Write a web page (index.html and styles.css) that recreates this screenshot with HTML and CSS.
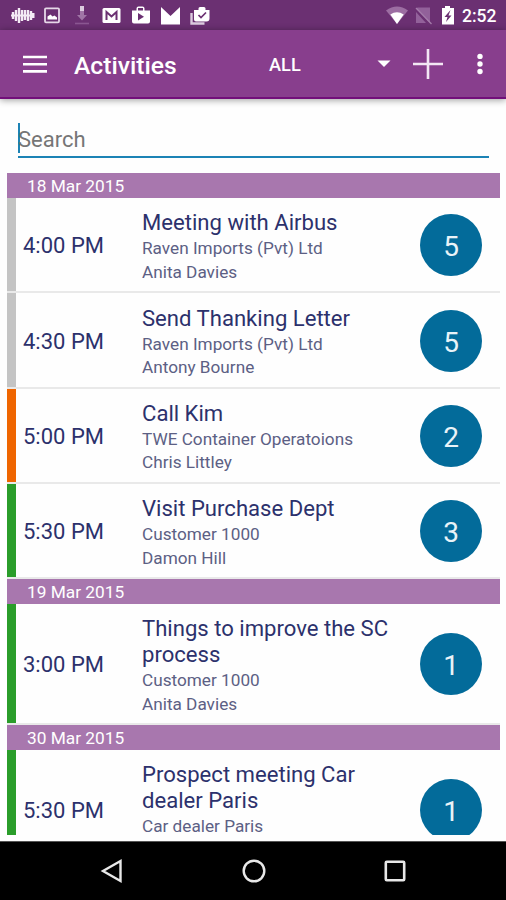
FILE: index.html
```
<!DOCTYPE html>
<html lang="en">
<head>
  <meta charset="UTF-8">
  <title>Activities</title>
  <link rel="stylesheet" href="styles.css">
</head>
<body>
<div class="screen">
  <div class="statusbar">
    <svg class="notifications" width="220" height="30" viewBox="0 0 220 30">
      <g stroke="#f4ebf5" stroke-width="2.4">
        <path d="M13 12v7M16 10v11M19 8v15M22 10v11M25 10v10M28 10v11M31 11v9M33.300 13v5"/>
        <path d="M11 15.500h23" stroke-width="2"/>
      </g>
      <rect x="45" y="8.300" width="14" height="14" rx="1" fill="none" stroke="#e6d8e8" stroke-width="1.800"/>
      <path d="M47.500 19.500v-3l3-2 2 2 2-1 2.500 2v2z" fill="#fff"/>
      <path d="M80 6h4v5h-4z" fill="#dccbdf"/>
      <path d="M80 11h4v4h3l-5 5.500-5-5.500h3z" fill="#a076a6"/>
      <path d="M75 23.500h14" stroke="#8b5792" stroke-width="1.600"/>
      <rect x="102.500" y="8" width="18" height="15" rx="1.500" fill="#fff"/>
      <path d="M106.500 20v-8l5 4.500 5-4.500v8" fill="none" stroke="#6b3072" stroke-width="2"/>
      <path d="M132 10.500h4.500v-2q0-2 2-2h4q2 0 2 2v2h5.500v11q0 2-2 2h-14q-2 0-2-2zM138 8v2.500h5V8z" fill="#fff" fill-rule="evenodd"/>
      <path d="M138 13v7.500l6-3.700z" fill="#6b3072"/>
      <path d="M161 7l9.500 9L180 7v17.500h-19z" fill="#fff"/>
      <path d="M191.500 13v10.500h13" fill="none" stroke="#dccbdf" stroke-width="2.400"/>
      <path d="M194 10h4.500V8.500q0-1.500 1.500-1.500h4q1.500 0 1.500 1.500V10h4v8.500q0 3-3 3h-10.500q-2 0-2-2z" fill="#fff"/>
      <path d="M198.500 15l2.500 2.500 5-5" fill="none" stroke="#6b3072" stroke-width="1.700"/>
    </svg>
    <svg class="signals" width="74" height="30" viewBox="384 0 74 30">
      <path d="M386 10.500q11-8 22 0l-11 13.500z" fill="#9c6da2"/>
      <path d="M390.300 14.500q6.700-4.500 13.400 0l-6.700 9.500z" fill="#fff"/>
      <path d="M430 7.500v15.500l-13.500-14.500 1-1zM416 12v11h10z" fill="#92619a"/>
      <path d="M416 8l15.500 16" stroke="#a57cab" stroke-width="1.300"/>
      <path d="M442 8h3V6h5v2h4v16.500h-12z" fill="#fff"/>
      <path d="M450.500 10l-6 7h3l-1.500 5 5.500-6.500h-3z" fill="#6b3072"/>
    </svg>
    <span class="clock">2:52</span>
  </div>

  <div class="toolbar">
    <svg class="menu" width="24" height="18" viewBox="0 0 24 18">
      <path d="M0 2h24M0 9.200h24M0 16.400h24" stroke="#fff" stroke-width="2.600"/>
    </svg>
    <h1>Activities</h1>
    <span class="filter">ALL</span>
    <svg class="arrow" width="14" height="8" viewBox="0 0 14 8"><path d="M.5.500h13L7 7z" fill="#fff"/></svg>
    <svg class="add" width="30" height="30" viewBox="0 0 30 30"><path d="M15 0v30M0 15h30" stroke="#f3e6f4" stroke-width="2.600"/></svg>
    <svg class="more" width="6" height="22" viewBox="0 0 6 22">
      <g fill="#fff"><circle cx="3" cy="3.400" r="2.700"/><circle cx="3" cy="11" r="2.700"/><circle cx="3" cy="18.500" r="2.700"/></g>
    </svg>
  </div>

  <div class="content">
    <div class="search"><span>Search</span></div>

    <div class="list">
      <div class="date">18 Mar 2015</div>
      <div class="row gray">
        <div class="time">4:00 PM</div>
        <div class="info"><h2>Meeting with Airbus</h2><p>Raven Imports (Pvt) Ltd</p><p>Anita Davies</p></div>
        <div class="count">5</div>
      </div>
      <div class="row gray">
        <div class="time">4:30 PM</div>
        <div class="info"><h2>Send Thanking Letter</h2><p>Raven Imports (Pvt) Ltd</p><p>Antony Bourne</p></div>
        <div class="count">5</div>
      </div>
      <div class="row orange">
        <div class="time">5:00 PM</div>
        <div class="info"><h2>Call Kim</h2><p>TWE Container Operatoions</p><p>Chris Littley</p></div>
        <div class="count">2</div>
      </div>
      <div class="row green">
        <div class="time">5:30 PM</div>
        <div class="info"><h2>Visit Purchase Dept</h2><p>Customer 1000</p><p>Damon Hill</p></div>
        <div class="count">3</div>
      </div>

      <div class="date">19 Mar 2015</div>
      <div class="row green">
        <div class="time">3:00 PM</div>
        <div class="info"><h2>Things to improve the SC process</h2><p>Customer 1000</p><p>Anita Davies</p></div>
        <div class="count">1</div>
      </div>

      <div class="date">30 Mar 2015</div>
      <div class="row green">
        <div class="time">5:30 PM</div>
        <div class="info"><h2>Prospect meeting Car dealer Paris</h2><p>Car dealer Paris</p><p>&nbsp;</p></div>
        <div class="count">1</div>
      </div>
    </div>
  </div>

  <div class="navbar">
    <svg width="24" height="26" viewBox="0 0 24 26"><path d="M20.500 3v20L3 13z" fill="none" stroke="#e8e8e8" stroke-width="2.400"/></svg>
    <svg width="26" height="26" viewBox="0 0 26 26"><circle cx="13" cy="13" r="10.300" fill="none" stroke="#e8e8e8" stroke-width="2.400"/></svg>
    <svg width="22" height="22" viewBox="0 0 22 22"><rect x="1.800" y="1.800" width="18.400" height="18.400" rx="1" fill="none" stroke="#e8e8e8" stroke-width="2.600"/></svg>
  </div>
</div>
</body>
</html>
```
FILE: styles.css
```
* { box-sizing: border-box; }
body {
  margin: 0;
  font-family: Roboto, sans-serif;
  background: #fefefe;
}
h1, h2, p { margin: 0; font-weight: 400; }
svg { display: block; flex: none; }
.screen {
  display: flex;
  flex-direction: column;
  width: 506px;
  height: 900px;
  overflow: hidden;
}

.statusbar {
  display: flex;
  align-items: center;
  height: 30px;
  background: #6b3072;
  color: #fff;
}
.signals { margin-left: 164px; }
.clock {
  margin: 2px 0 0 4px;
  font-size: 17.5px;
  font-weight: 500;
}

.toolbar {
  display: flex;
  align-items: center;
  height: 69px;
  padding-left: 23px;
  background: #883e8d;
  border-bottom: 2px solid #720f7a;
  box-shadow: 0 1px 7px rgba(0,0,0,0.4);
  color: #fff;
  z-index: 1;
}
.toolbar h1 {
  width: 195px;
  margin: 3px 0 0 27px;
  font-size: 24.7px;
  font-weight: 500;
}
.filter {
  width: 108px;
  margin-top: 2px;
  font-size: 18.2px;
  font-weight: 500;
}
.add { margin-left: 22px; }
.more { margin-left: 34px; }

.content {
  height: 736px;
  padding: 24px 6px 0 7px;
  overflow: hidden;
}
.search {
  height: 35px;
  margin: 0 11px 15px 11px;
  border-bottom: 2px solid #1c83b5;
}
.search span {
  display: block;
  height: 30px;
  border-left: 2px solid #1c83b5;
  font-size: 22px;
  line-height: 34px;
  color: #767676;
  text-indent: -2px;
}

.date {
  height: 25px;
  padding-left: 20px;
  background: #a877ae;
  color: #fff;
  font-size: 17.3px;
  line-height: 26px;
}
.row {
  display: flex;
  align-items: center;
  min-height: 93.3px;
  margin-bottom: 2px;
  padding: 8.3px 0 7px 7px;
  border-left: 9px solid;
  box-shadow: 0 2px #e9e9e9;
}
.gray { border-left-color: #c4c4c4; }
.orange { border-left-color: #ef6500; }
.green { border-left-color: #2a9d2a; }
.time {
  width: 119px;
  padding-top: 1px;
  font-size: 22px;
  color: #2c316c;
}
.info {
  width: 262px;
  margin-top: 4px;
}
.info h2 {
  margin-bottom: 1.5px;
  font-size: 22.1px;
  line-height: 25.6px;
  color: #2c316c;
}
.info p {
  font-size: 17.2px;
  line-height: 23.4px;
  color: #5c6084;
}
.count {
  flex: none;
  width: 62px;
  height: 62px;
  margin-left: 16px;
  border-radius: 50%;
  background: #036b9a;
  color: #e9f3f8;
  font-size: 28px;
  line-height: 65px;
  text-align: center;
}

.navbar {
  display: flex;
  align-items: center;
  gap: 117px;
  height: 59px;
  margin-top: auto;
  padding-left: 100px;
  background: #000;
  border-top: 1px solid #555;
}
```
